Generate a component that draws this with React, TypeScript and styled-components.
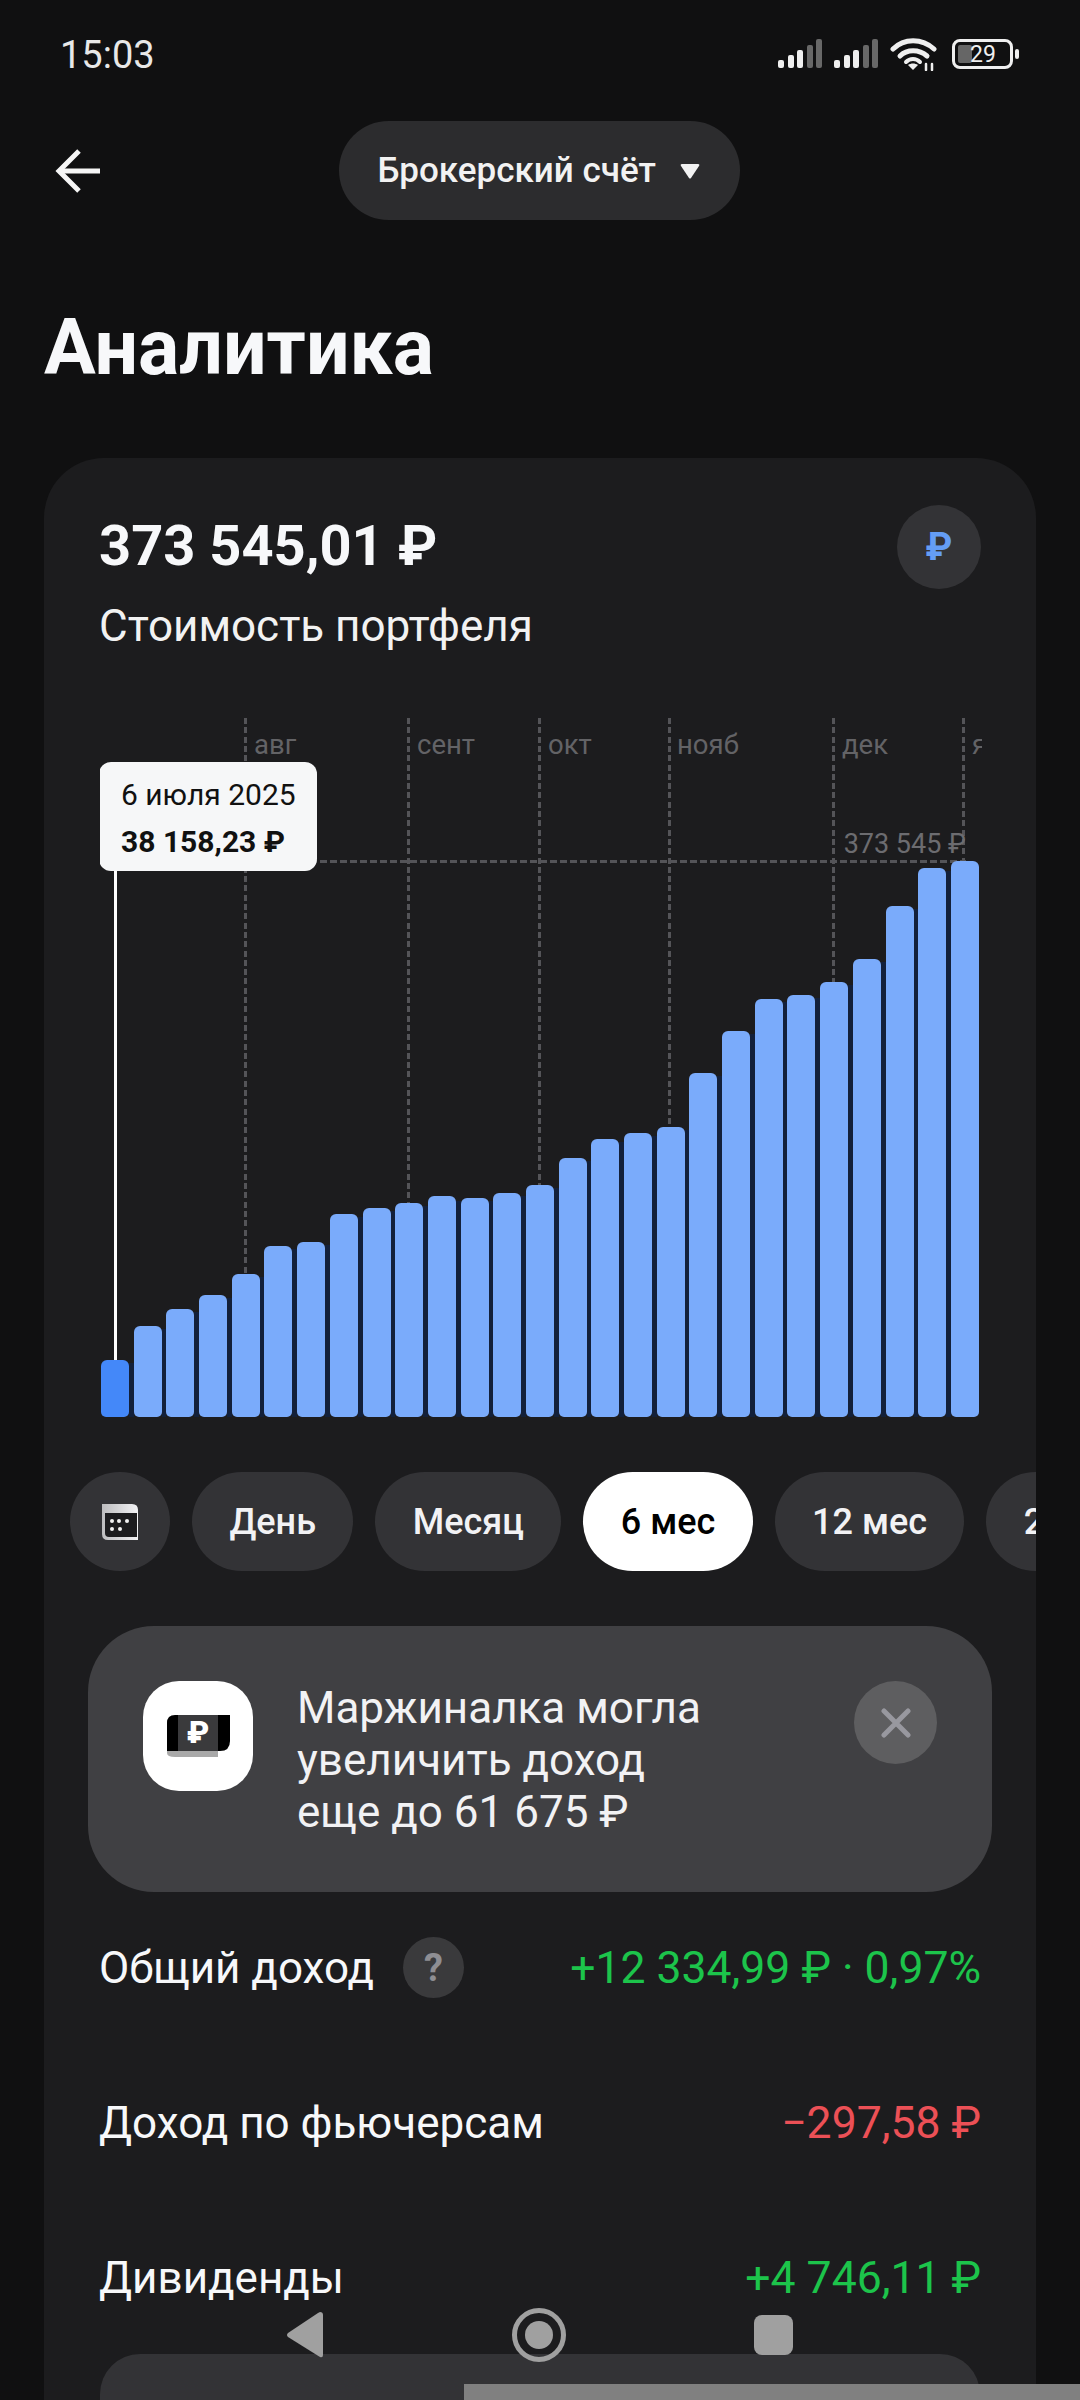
import React from 'react';
import styled, { createGlobalStyle } from 'styled-components';

const Global = createGlobalStyle`
  html, body { margin: 0; padding: 0; background: #101011; }
  #root { width: 1080px; height: 2400px; overflow: hidden; }
  * { box-sizing: border-box; }
`;

const Page = styled.div`
  position: relative;
  width: 1080px;
  height: 2400px;
  overflow: hidden;
  background: #101011;
  color: #f5f6f8;
  font-family: Roboto, "Noto Sans", sans-serif;
`;

const StatusBar = styled.div`
  height: 108px;
  padding: 0 67px 0 60px;
  display: flex;
  align-items: center;
  justify-content: space-between;
`;
const Clock = styled.div`
  margin-top: 2px;
  font-size: 38px;
  color: #e8e8e8;
`;
const StatusIcons = styled.div`
  display: flex;
  align-items: center;
  gap: 12px;
`;
const Battery = styled.div`
  position: relative;
  width: 61px;
  height: 30px;
  border: 3px solid #efefef;
  border-radius: 8px;
  margin-left: 3px;
  display: flex;
  align-items: center;
  justify-content: center;
  font-size: 23px;
  color: #efefef;
  padding-left: 1px;
  &::before {
    content: '';
    position: absolute;
    left: 3px;
    top: 3px;
    bottom: 3px;
    width: 14px;
    background: #666;
    border-radius: 2px;
  }
  &::after {
    content: '';
    position: absolute;
    right: -9px;
    top: 7px;
    width: 4px;
    height: 10px;
    background: #efefef;
    border-radius: 2px;
  }
`;
const BatteryText = styled.span`
  position: relative;
`;

const Nav = styled.div`
  display: grid;
  grid-template-columns: 1fr auto 1fr;
  align-items: center;
  margin-top: 13px;
  padding-left: 55px;
  padding-right: 57px;
`;
const AccountPill = styled.div`
  height: 99px;
  width: 401px;
  border-radius: 50px;
  background: #2c2c2e;
  display: flex;
  align-items: center;
  padding-left: 39px;
  gap: 24px;
  font-size: 35px;
  font-weight: 500;
  color: #f2f2f2;
`;

const Title = styled.h1`
  margin: 86px 0 0 44px;
  font-size: 77px;
  line-height: 84px;
  font-weight: 700;
  color: #f7f8fa;
`;

const Card = styled.section`
  margin: 68px 44px 0;
  height: 2000px;
  border-radius: 60px;
  background: #1c1c1e;
  overflow: hidden;
`;
const CardHead = styled.div`
  display: flex;
  justify-content: space-between;
  align-items: flex-start;
  padding: 47px 55px 0 55px;
`;
const Amount = styled.div`
  margin-top: 1px;
  font-size: 56px;
  line-height: 80px;
  font-weight: 700;
  color: #f7f8fa;
`;
const Subtitle = styled.div`
  margin-top: 15px;
  font-size: 44px;
  line-height: 50px;
  color: #f2f2f2;
`;
const RubButton = styled.div`
  width: 84px;
  height: 84px;
  border-radius: 50%;
  background: #333336;
  display: flex;
  align-items: center;
  justify-content: center;
  color: #649df5;
  font-size: 38px;
  font-weight: 700;
`;

const Chart = styled.div`
  position: relative;
  margin: 67px 0 0 56px;
  width: 882px;
  height: 699px;
  overflow: hidden;
  display: flex;
  align-items: flex-end;
  padding-left: 1px;
`;
const VLine = styled.div<{ $x: number }>`
  position: absolute;
  left: ${(p) => p.$x}px;
  top: 0;
  bottom: 0;
  width: 3px;
  background: repeating-linear-gradient(to bottom, #545458 0 6px, transparent 6px 9.3px);
`;
const HLine = styled.div`
  position: absolute;
  left: 0;
  width: 866px;
  top: 142px;
  height: 3px;
  background: repeating-linear-gradient(to right, #545458 0 7px, transparent 7px 10px);
`;
const Month = styled.div<{ $x: number }>`
  position: absolute;
  left: ${(p) => p.$x}px;
  top: 7px;
  font-size: 27.5px;
  line-height: 40px;
  color: #636366;
`;
const MaxValue = styled.div`
  position: absolute;
  right: 16px;
  top: 108px;
  font-size: 27px;
  line-height: 36px;
  color: #6c6c70;
`;
const Bar = styled.div<{ $active?: boolean }>`
  position: relative;
  z-index: 1;
  flex: 0 0 28px;
  border-radius: 6px 6px 5px 5px;
  background: ${(p) => (p.$active ? '#4488f9' : '#7aabfb')};
`;
const BarGap = styled.div`
  position: relative;
  z-index: 1;
  flex: 0 0 4.7px;
  background: #13203a;
`;
const Cursor = styled.div`
  position: absolute;
  z-index: 2;
  left: 14px;
  top: 150px;
  height: 492px;
  width: 3px;
  background: #fff;
`;
const Tooltip = styled.div`
  position: absolute;
  z-index: 3;
  left: -1px;
  top: 44px;
  width: 218px;
  height: 109px;
  border-radius: 12px;
  background: #f6f7f8;
  color: #111;
  padding: 9px 0 0 22px;
  font-size: 30px;
  line-height: 47px;
`;
const TooltipValue = styled.div`
  font-weight: 700;
`;

const Chips = styled.div`
  display: flex;
  gap: 22px;
  margin-top: 55px;
  padding-left: 26px;
  overflow: hidden;
`;
const Chip = styled.div<{ $active?: boolean }>`
  flex: 0 0 auto;
  height: 99px;
  padding: 0 37.4px;
  border-radius: 50px;
  display: flex;
  align-items: center;
  justify-content: center;
  font-size: 36px;
  font-weight: 500;
  background: ${(p) => (p.$active ? '#ffffff' : '#333336')};
  color: ${(p) => (p.$active ? '#000' : '#f2f2f4')};
`;
const CalendarChip = styled(Chip)`
  width: 100px;
  padding: 0;
`;

const Banner = styled.div`
  margin: 55px 44px 0;
  height: 266px;
  border-radius: 66px;
  background: #404043;
  padding: 55px 55px 0;
  display: flex;
  align-items: flex-start;
`;
const BannerIcon = styled.div`
  flex: 0 0 110px;
  height: 110px;
  border-radius: 36px;
  background: #fff;
  display: flex;
  align-items: center;
  justify-content: center;
`;
const BannerText = styled.div`
  flex: 1;
  margin-left: 44px;
  margin-top: 1px;
  font-size: 44px;
  line-height: 52px;
  color: #f2f2f4;
`;
const CloseButton = styled.div`
  flex: 0 0 83px;
  height: 83px;
  border-radius: 50%;
  background: #5e5e60;
  display: flex;
  align-items: center;
  justify-content: center;
`;

const Rows = styled.div`
  margin-top: 45px;
  padding: 0 55px;
  display: flex;
  flex-direction: column;
  gap: 94px;
`;
const Row = styled.div`
  height: 61px;
  display: flex;
  align-items: center;
  font-size: 44px;
  color: #f7f8fa;
`;
const RowValue = styled.div<{ $tone: 'up' | 'down' }>`
  margin-left: auto;
  font-size: 44.5px;
  color: ${(p) => (p.$tone === 'up' ? '#1cc44b' : '#ec5056')};
`;
const HelpBadge = styled.div`
  margin-left: 29px;
  width: 61px;
  height: 61px;
  border-radius: 50%;
  background: #3a3a3c;
  color: #8e8e93;
  font-size: 38px;
  font-weight: 700;
  display: flex;
  align-items: center;
  justify-content: center;
`;
const NextCard = styled.div`
  margin: 46px 56px 0;
  height: 200px;
  border-radius: 40px 40px 0 0;
  background: #333336;
`;

const SystemNav = styled.div`
  position: absolute;
  left: 0;
  right: 0;
  top: 2308px;
  height: 54px;
  display: flex;
  justify-content: center;
  gap: 180px;
  margin-left: -2px;
`;
const NavSlot = styled.div`
  width: 54px;
  height: 54px;
  display: flex;
  align-items: center;
  justify-content: center;
`;
const HomeRing = styled.div`
  width: 54px;
  height: 54px;
  border-radius: 50%;
  border: 5px solid #a0a0a0;
  display: flex;
  align-items: center;
  justify-content: center;
  &::after {
    content: '';
    width: 28px;
    height: 28px;
    border-radius: 50%;
    background: #a0a0a0;
  }
`;
const RecentSquare = styled.div`
  width: 39px;
  height: 40px;
  border-radius: 8px;
  background: #a0a0a0;
`;
const GreyStrip = styled.div`
  position: absolute;
  right: 0;
  bottom: 0;
  width: 616px;
  height: 16px;
  background: #808080;
`;

const tops = [1360, 1326, 1309, 1295, 1274, 1246, 1242, 1214, 1208, 1203, 1196, 1198, 1193, 1185, 1158, 1139, 1133, 1127, 1073, 1031, 999, 995, 982, 959, 906, 868, 861];
const heights = tops.map((t) => 1417 - t);
const gridX = [144, 307, 438, 568, 732, 862];
const months: [string, number][] = [
  ['авг', 154],
  ['сент', 317],
  ['окт', 448],
  ['нояб', 577],
  ['дек', 742],
  ['янв', 872],
];

const Signal = () => (
  <svg width="44" height="30" viewBox="0 0 44 30">
    <rect x="0" y="21" width="6" height="8" rx="2" fill="#efefef" />
    <rect x="10" y="16" width="6" height="13" rx="2" fill="#efefef" />
    <rect x="19" y="11" width="6" height="18" rx="2" fill="#efefef" />
    <rect x="29" y="6" width="6" height="23" rx="2" fill="#686868" />
    <rect x="38" y="0" width="6" height="29" rx="2" fill="#686868" />
  </svg>
);

const Wifi = () => (
  <svg width="47" height="34" viewBox="0 0 47 34" fill="none" stroke="#efefef" strokeWidth="5" strokeLinecap="round">
    <path d="M3 12 C14 1 32 1 44 12" />
    <path d="M10 19 C17 12 29 12 37 19" />
    <path d="M16 25 C20 21 26 21 30 25" strokeWidth="4" />
    <path d="M23 33 L18 28 C21 26 25 26 28 28 Z" fill="#efefef" stroke="none" />
    <path d="M36 33 V27 M42 33 V27" strokeWidth="2.5" />
  </svg>
);

const BackArrow = () => (
  <svg width="46" height="44" viewBox="0 0 46 44" fill="none" stroke="#f5f5f5" strokeWidth="5">
    <path d="M45 22 H4" />
    <path d="M24 2 L4 22 L24 42" />
  </svg>
);

const Caret = () => (
  <svg width="20" height="16" viewBox="0 0 20 16">
    <path d="M2 1 H18 Q20 1 19 3 L11 15 Q10 16 9 15 L1 3 Q0 1 2 1 Z" fill="#f2f2f2" />
  </svg>
);

const CalendarIcon = () => (
  <svg width="36" height="36" viewBox="0 0 36 36">
    <defs>
      <linearGradient id="calTop" x1="0" y1="0" x2="1" y2="0">
        <stop offset="0" stopColor="#bdbdbf" />
        <stop offset="1" stopColor="#f2f2f4" />
      </linearGradient>
    </defs>
    <path d="M0 0 H30 Q36 0 36 6 V36 H6 Q0 36 0 30 Z" fill="url(#calTop)" />
    <path d="M3 9 H35 V33 H7 Q3 33 3 29 Z" fill="#1c1c1e" />
    <g fill="#f2f2f2">
      <circle cx="17" cy="17" r="2" />
      <circle cx="25" cy="17" r="2" />
      <circle cx="10" cy="17" r="2" />
      <circle cx="10" cy="25" r="2" />
      <circle cx="18" cy="25" r="2" />
    </g>
  </svg>
);

const BanknoteIcon = () => (
  <svg width="63" height="42" viewBox="0 0 63 42">
    <path d="M0 6 H51 V42 H8 Q0 42 0 38 Z" fill="#a9a9a9" />
    <path d="M8 0 H63 V26 Q63 36 53 36 H0 V8 Q0 0 8 0 Z" fill="#000" />
    <rect x="11" y="0" width="40" height="36" fill="#3a3a3c" />
    <text x="31" y="28" textAnchor="middle" fontFamily="Roboto, sans-serif" fontWeight="900" fontSize="31" fill="#fff">₽</text>
  </svg>
);

const CloseIcon = () => (
  <svg width="30" height="30" viewBox="0 0 30 30" stroke="#98989f" strokeWidth="5" strokeLinecap="round">
    <path d="M3 3 L27 27 M27 3 L3 27" />
  </svg>
);

const BackTriangle = () => (
  <svg width="36" height="46" viewBox="0 0 36 46">
    <path d="M33 0 Q36 0 36 3 V43 Q36 46 33 45 L1 25 Q-1 23 1 21 L31 1 Z" fill="#a0a0a0" />
  </svg>
);

export default function App() {
  return (
    <Page>
      <Global />
      <StatusBar>
        <Clock>15:03</Clock>
        <StatusIcons>
          <Signal />
          <Signal />
          <Wifi />
          <Battery>
            <BatteryText>29</BatteryText>
          </Battery>
        </StatusIcons>
      </StatusBar>
      <Nav>
        <BackArrow />
        <AccountPill>
          Брокерский счёт
          <Caret />
        </AccountPill>
      </Nav>
      <Title>Аналитика</Title>
      <Card>
        <CardHead>
          <div>
            <Amount>373 545,01 ₽</Amount>
            <Subtitle>Стоимость портфеля</Subtitle>
          </div>
          <RubButton>₽</RubButton>
        </CardHead>
        <Chart>
          {gridX.map((x) => (
            <VLine key={x} $x={x} />
          ))}
          <HLine />
          {months.map(([m, x]) => (
            <Month key={m} $x={x}>
              {m}
            </Month>
          ))}
          <MaxValue>373 545 ₽</MaxValue>
          {heights.map((h, i) => (
            <React.Fragment key={i}>
              <Bar $active={i === 0} style={{ height: h }} />
              {i < heights.length - 1 && <BarGap style={{ height: Math.min(h, heights[i + 1]) - 3 }} />}
            </React.Fragment>
          ))}
          <Cursor />
          <Tooltip>
            6 июля 2025
            <TooltipValue>38 158,23 ₽</TooltipValue>
          </Tooltip>
        </Chart>
        <Chips>
          <CalendarChip>
            <CalendarIcon />
          </CalendarChip>
          <Chip>День</Chip>
          <Chip>Месяц</Chip>
          <Chip $active>6 мес</Chip>
          <Chip>12 мес</Chip>
          <Chip>2 года</Chip>
        </Chips>
        <Banner>
          <BannerIcon>
            <BanknoteIcon />
          </BannerIcon>
          <BannerText>
            Маржиналка могла
            <br />
            увеличить доход
            <br />
            еще до 61 675 ₽
          </BannerText>
          <CloseButton>
            <CloseIcon />
          </CloseButton>
        </Banner>
        <Rows>
          <Row>
            Общий доход
            <HelpBadge>?</HelpBadge>
            <RowValue $tone="up">+12 334,99 ₽ · 0,97%</RowValue>
          </Row>
          <Row>
            Доход по фьючерсам
            <RowValue $tone="down">−297,58 ₽</RowValue>
          </Row>
          <Row>
            Дивиденды
            <RowValue $tone="up">+4 746,11 ₽</RowValue>
          </Row>
        </Rows>
        <NextCard />
      </Card>
      <SystemNav>
        <NavSlot>
          <BackTriangle />
        </NavSlot>
        <NavSlot>
          <HomeRing />
        </NavSlot>
        <NavSlot>
          <RecentSquare />
        </NavSlot>
      </SystemNav>
      <GreyStrip />
    </Page>
  );
}
